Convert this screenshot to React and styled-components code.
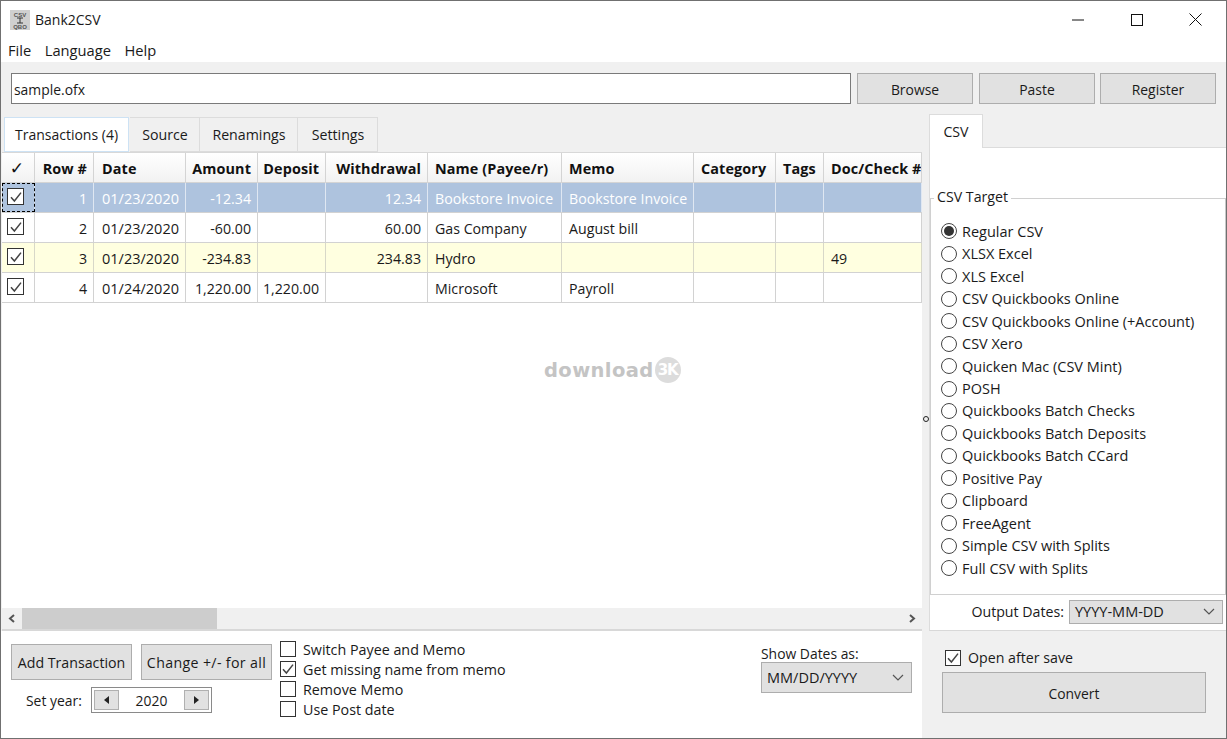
import React from "react";
import styled, { createGlobalStyle } from "styled-components";

const Global = createGlobalStyle`
  * { box-sizing: border-box; }
  html, body { margin: 0; padding: 0; background: #fff; }
  body { font-family: "Open Sans", "Noto Sans", "Liberation Sans", sans-serif; font-size: 13.9px; color: #1a1a1a; }
`;

const Win = styled.div`
  width: 1227px; height: 739px; border: 1px solid #707070; display: flex; flex-direction: column; overflow: hidden; background: #fff;
`;
const TitleBar = styled.div`
  height: 37px; display: flex; align-items: center; padding: 0 1px 0 9px; flex: none;
`;
const AppName = styled.span` margin-left: 5px; font-size: 14px; flex: 1; `;
const WinBtn = styled.button`
  width: 59px; height: 37px; border: 0; background: none; display: flex; align-items: center; justify-content: center; padding: 0;
`;
const MenuBar = styled.div`
  height: 24px; display: flex; align-items: center; padding-left: 7px; gap: 13.5px; flex: none; font-size: 14.7px;
`;
const Toolbar = styled.div`
  height: 52px; background: #f0f0f0; display: flex; padding: 11px 10px 0 10px; flex: none;
`;
const PathInput = styled.div`
  width: 840px; height: 31px; background: #fff; border: 1px solid #7a7a7a; display: flex; align-items: center; padding: 1px 0 0 2px; margin-right: 6px;
`;
const Btn = styled.button`
  font: inherit; color: #1a1a1a; background: #e1e1e1; border: 1px solid #adadad; padding: 1px 0 0;
  width: ${p => p.$w}px; height: ${p => p.$h}px; margin-right: ${p => p.$mr || 0}px; flex: none;
  letter-spacing: ${p => p.$ls || 0}px;
`;
const Main = styled.div` flex: 1; display: flex; min-height: 0; background: #f0f0f0; `;
const LeftPane = styled.div` width: 921px; display: flex; flex-direction: column; flex: none; `;
const TabRow = styled.div` height: 38px; padding: 3px 0 0 3px; display: flex; flex: none; `;
const Tab = styled.div`
  height: 35px; width: ${p => p.$w}px; display: flex; align-items: center; justify-content: center;
  background: ${p => p.$on ? "#fff" : "#f0f0f0"};
  border: 1px solid ${p => p.$on ? "#cde2f4" : "#dcdcdc"};
  border-left-width: ${p => p.$on ? 1 : 0}px;
  margin-right: ${p => p.$on ? 1 : 0}px;
  font-size: ${p => p.$on ? 14 : 14.2}px;
  padding-left: ${p => p.$on ? 0 : 1}px;
`;
const TableArea = styled.div`
  flex: 1; min-height: 0; display: flex; flex-direction: column; background: #fff; margin-left: 1px; position: relative;
`;
const COLS = "33px 59px 92px 72px 68px 102px 134px 132px 82px 48px 98px";
const HeadRow = styled.div`
  display: grid; grid-template-columns: ${COLS}; height: 31px; flex: none;
  background: linear-gradient(#fff, #f2f2f2); border-top: 1px solid #d8d8d8; border-bottom: 1px solid #d4d4d4;
`;
const HeadCell = styled.div`
  display: flex; align-items: center; font-weight: 700; color: #111; padding: 1px 6px 0 ${p => p.$pl || 7}px;
  justify-content: ${p => p.$a === "r" ? "flex-end" : p.$a === "c" ? "center" : "flex-start"};
  border-right: 1px solid #d4d4d4; white-space: nowrap; overflow: hidden; font-size: 14.4px; letter-spacing: .1px;
`;
const CheckMark = styled.span` font-family: "DejaVu Sans", sans-serif; font-weight: 700; font-size: 17px; line-height: 1; margin-right: 3px; `;
const Row = styled.div`
  display: grid; grid-template-columns: ${COLS}; height: 30px; flex: none;
  background: ${p => p.$bg}; color: ${p => p.$fg}; border-bottom: 1px solid #d2d2d2;
`;
const Cell = styled.div`
  display: flex; align-items: center; padding: 1px 6px 0 ${p => p.$pl || 7}px; white-space: nowrap; overflow: hidden; font-size: ${p => p.$fs || 14.2}px;
  justify-content: ${p => p.$a === "r" ? "flex-end" : "flex-start"};
  border-right: 1px solid ${p => p.$line};
`;
const CheckCell = styled(Cell)`
  padding: 0 0 2px 5px;
  outline: ${p => p.$focus ? "1px dashed #000" : "none"}; outline-offset: -1px;
`;
const TableBody = styled.div` flex: 1; `;
const HScroll = styled.div`
  height: 23px; flex: none; background: #f0f0f0; display: flex; align-items: center; border-bottom: 2px solid #d8d8d8;
`;
const ScrollArrow = styled.div` width: 20px; display: flex; justify-content: center; flex: none; `;
const Thumb = styled.div` width: 195px; height: 21px; background: #cdcdcd; flex: none; `;
const ScrollFill = styled.div` flex: 1; `;
const Watermark = styled.div`
  position: absolute; left: 542px; top: 205px; display: flex; align-items: center; gap: 1px;
  font-family: "DejaVu Sans", sans-serif; font-weight: 700; font-size: 19.5px; letter-spacing: .4px; color: #c4c4c4;
`;
const WmBadge = styled.span`
  width: 26px; height: 26px; border-radius: 50%; background: #dcdcdc; color: #fff; font-size: 15px; display: flex; align-items: center; justify-content: center; letter-spacing: -1px;
`;
const Bottom = styled.div`
  height: 107px; flex: none; background: #fff; display: flex; padding: 13px 10px 0 10px;
`;
const BtnCol = styled.div` width: 269px; flex: none; display: flex; flex-direction: column; `;
const BtnRow = styled.div` display: flex; font-size: 14.2px; `;
const YearRow = styled.div` display: flex; align-items: center; margin-top: 7px; padding-left: 15px; `;
const YearLabel = styled.span` width: 65px; flex: none; `;
const Spinner = styled.div`
  width: 121px; height: 26px; border: 1px solid #8a8a8a; padding: 2px; display: flex; align-items: center;
`;
const SpinBtn = styled.div`
  width: 25px; height: 20px; background: #e1e1e1; border: 1px solid #b0b0b0; display: flex; align-items: center; justify-content: center; flex: none;
`;
const SpinVal = styled.span` flex: 1; text-align: center; `;
const CheckCol = styled.div` display: flex; flex-direction: column; flex: 1; margin-top: -5px; font-size: 14.3px; `;
const CheckLine = styled.label`
  height: 20px; display: flex; align-items: center; gap: 7px; white-space: nowrap;
`;
const Box = styled.span`
  width: ${p => p.$s || 16}px; height: ${p => p.$s || 16}px; border: 1px solid #333; background: #fff; display: flex; align-items: center; justify-content: center; flex: none;
`;
const DateCol = styled.div` width: 151px; flex: none; `;
const DateLabel = styled.div` height: 18px; line-height: 19px; white-space: nowrap; `;
const Select = styled.div`
  width: ${p => p.$w}px; height: ${p => p.$h}px; background: #e1e1e1; border: 1px solid #adadad; display: flex; align-items: center; justify-content: space-between; padding: 0 7px 0 5px; flex: none; font-size: 14.5px;
`;
const Splitter = styled.div` width: 7px; flex: none; display: flex; align-items: center; justify-content: center; padding-bottom: 15px; `;
const SplitDot = styled.span` width: 6px; height: 6px; border: 1px solid #222; border-radius: 50%; `;
const RightPane = styled.div` flex: 1; display: flex; flex-direction: column; min-width: 0; `;
const RightTabs = styled.div` height: 33px; flex: none; display: flex; `;
const RightTab = styled.div`
  width: 54px; height: 34px; background: #fff; border: 1px solid #dcdcdc; border-bottom: 0; display: flex; align-items: center; justify-content: center; position: relative; z-index: 1; font-size: 14.2px;
`;
const RightPanel = styled.div`
  height: 484px; flex: none; background: #fff; border: 1px solid #dcdcdc; border-right: 0; border-bottom-color: #d8d8d8; display: flex; flex-direction: column; padding-top: 41px;
`;
const Group = styled.fieldset`
  margin: 0; padding: 13px 0 0 10px; border: 1px solid #d0d0d0; border-right-color: #c8c8c8; height: 406px; min-width: 0; flex: none;
`;
const Legend = styled.legend` padding: 0 3px 2px; margin-left: -7px; line-height: 16px; font-size: 14.2px; `;
const RadioRow = styled.label` height: 22.47px; display: flex; align-items: center; gap: 5px; white-space: nowrap; font-size: 14.5px; `;
const Radio = styled.span`
  width: 16px; height: 16px; border: 1px solid #444; border-radius: 50%; display: flex; align-items: center; justify-content: center; background: #fff; flex: none;
  &::after { content: ""; width: 10px; height: 10px; border-radius: 50%; background: ${p => p.$on ? "#333" : "transparent"}; }
`;
const OutputRow = styled.div`
  flex: 1; display: flex; align-items: center; justify-content: flex-end; gap: 5px; padding: 0 3px 2px 0; font-size: 14.2px;
`;
const Lower = styled.div` flex: 1; padding: 18px 20px 0 13px; display: flex; flex-direction: column; `;
const OpenRow = styled.label` display: flex; align-items: center; gap: 7px; height: 17px; padding-left: 3px; margin-bottom: 6px; font-size: 14.2px; `;

const Chk = ({ on = true, s }) => (
  <Box $s={s}>
    {on && (
      <svg width="12" height="12" viewBox="0 0 12 12"><path d="M1 6.2 4.4 10 11 1.6" fill="none" stroke="#444" strokeWidth="1.5" /></svg>
    )}
  </Box>
);
const Chevron = () => (
  <svg width="12" height="7" viewBox="0 0 12 7"><path d="M1 1 6 6 11 1" fill="none" stroke="#555" strokeWidth="1.2" /></svg>
);

const headers = [["", "c"], ["Row #", "r"], ["Date"], ["Amount", "r"], ["Deposit", "r"], ["Withdrawal", "r"], ["Name (Payee/r)"], ["Memo"], ["Category"], ["Tags"], ["Doc/Check #"]];
const rows = [
  { v: ["1", "01/23/2020", "-12.34", "", "12.34", "Bookstore Invoice", "Bookstore Invoice", "", "", ""], bg: "#aec3de", fg: "#fff", line: "#dfe7f2", focus: true },
  { v: ["2", "01/23/2020", "-60.00", "", "60.00", "Gas Company", "August bill", "", "", ""], bg: "#fff", fg: "#1a1a1a", line: "#d2d2d2" },
  { v: ["3", "01/23/2020", "-234.83", "", "234.83", "Hydro", "", "", "", "49"], bg: "#ffffe0", fg: "#1a1a1a", line: "#d8d8c8" },
  { v: ["4", "01/24/2020", "1,220.00", "1,220.00", "", "Microsoft", "Payroll", "", "", ""], bg: "#fff", fg: "#1a1a1a", line: "#d2d2d2" },
];
const align = ["r", "l", "r", "r", "r", "l", "l", "l", "l", "l"];
const targets = ["Regular CSV", "XLSX Excel", "XLS Excel", "CSV Quickbooks Online", "CSV Quickbooks Online (+Account)", "CSV Xero", "Quicken Mac (CSV Mint)", "POSH", "Quickbooks Batch Checks", "Quickbooks Batch Deposits", "Quickbooks Batch CCard", "Positive Pay", "Clipboard", "FreeAgent", "Simple CSV with Splits", "Full CSV with Splits"];
const options = [["Switch Payee and Memo", false], ["Get missing name from memo", true], ["Remove Memo", false], ["Use Post date", false]];

export default function App() {
  return (
    <Win>
      <Global />
      <TitleBar>
        <svg width="20" height="20" viewBox="0 0 20 20">
          <rect width="20" height="20" fill="#cfcfcf" />
          <text x="10" y="7" fontSize="6" fontWeight="700" textAnchor="middle" fill="#555" fontFamily="Liberation Sans">CSV</text>
          <text x="10" y="18.5" fontSize="6" fontWeight="700" textAnchor="middle" fill="#555" fontFamily="Liberation Sans">QBO</text>
          <path d="M7 8h6M10 8v5M7 13h6" stroke="#333" fill="none" />
        </svg>
        <AppName>Bank2CSV</AppName>
        <WinBtn>
          <svg width="12" height="2" viewBox="0 0 12 2"><path d="M0 1h12" stroke="#111" /></svg>
        </WinBtn>
        <WinBtn>
          <svg width="12" height="12" viewBox="0 0 12 12"><rect x=".5" y=".5" width="11" height="11" fill="none" stroke="#111" /></svg>
        </WinBtn>
        <WinBtn>
          <svg width="13" height="13" viewBox="0 0 13 13"><path d="M.5.5l12 12M12.5.5l-12 12" stroke="#111" /></svg>
        </WinBtn>
      </TitleBar>
      <MenuBar><span>File</span><span>Language</span><span>Help</span></MenuBar>
      <Toolbar>
        <PathInput>sample.ofx</PathInput>
        <Btn $w={116} $h={31} $mr={6}>Browse</Btn>
        <Btn $w={116} $h={31} $mr={5}>Paste</Btn>
        <Btn $w={116} $h={31}>Register</Btn>
      </Toolbar>
      <Main>
        <LeftPane>
          <TabRow>
            <Tab $on $w={125}>Transactions (4)</Tab>
            <Tab $w={70}>Source</Tab>
            <Tab $w={98}>Renamings</Tab>
            <Tab $w={80}>Settings</Tab>
          </TabRow>
          <TableArea>
            <HeadRow>
              {headers.map(([t, a], i) => (
                <HeadCell key={i} $a={a} $pl={i === 2 ? 8 : 7}>{i === 0 ? <CheckMark>✓</CheckMark> : t}</HeadCell>
              ))}
            </HeadRow>
            {rows.map(r => (
              <Row key={r.v[0]} $bg={r.bg} $fg={r.fg}>
                <CheckCell $line={r.line} $focus={r.focus}><Chk s={17} /></CheckCell>
                {r.v.map((c, i) => (
                  <Cell key={i} $a={align[i]} $line={r.line} $pl={i === 1 ? 8 : 7} $fs={i === 1 ? 14.5 : 14.2}>{c}</Cell>
                ))}
              </Row>
            ))}
            <TableBody />
            <Watermark>download<WmBadge>3K</WmBadge></Watermark>
            <HScroll>
              <ScrollArrow><svg width="8" height="9" viewBox="0 0 8 9"><path d="M6 1 2 4.5 6 8" fill="none" stroke="#555" strokeWidth="2" /></svg></ScrollArrow>
              <Thumb />
              <ScrollFill />
              <ScrollArrow><svg width="8" height="9" viewBox="0 0 8 9"><path d="M2 1 6 4.5 2 8" fill="none" stroke="#555" strokeWidth="2" /></svg></ScrollArrow>
            </HScroll>
          </TableArea>
          <Bottom>
            <BtnCol>
              <BtnRow>
                <Btn $w={121} $h={36} $mr={9}>Add Transaction</Btn>
                <Btn $w={131} $h={36} $ls={0.35}>Change +/- for all</Btn>
              </BtnRow>
              <YearRow>
                <YearLabel>Set year:</YearLabel>
                <Spinner>
                  <SpinBtn><svg width="5" height="8" viewBox="0 0 5 8"><path d="M5 0v8L0 4z" fill="#222" /></svg></SpinBtn>
                  <SpinVal>2020</SpinVal>
                  <SpinBtn><svg width="5" height="8" viewBox="0 0 5 8"><path d="M0 0v8l5-4z" fill="#222" /></svg></SpinBtn>
                </Spinner>
              </YearRow>
            </BtnCol>
            <CheckCol>
              {options.map(([t, on]) => <CheckLine key={t}><Chk on={on} />{t}</CheckLine>)}
            </CheckCol>
            <DateCol>
              <DateLabel>Show Dates as:</DateLabel>
              <Select $w={151} $h={31}>MM/DD/YYYY<Chevron /></Select>
            </DateCol>
          </Bottom>
        </LeftPane>
        <Splitter><SplitDot /></Splitter>
        <RightPane>
          <RightTabs><RightTab>CSV</RightTab></RightTabs>
          <RightPanel>
            <Group>
              <Legend>CSV Target</Legend>
              {targets.map((t, i) => <RadioRow key={t}><Radio $on={i === 0} />{t}</RadioRow>)}
            </Group>
            <OutputRow>
              Output Dates:
              <Select $w={154} $h={24}>YYYY-MM-DD<Chevron /></Select>
            </OutputRow>
          </RightPanel>
          <Lower>
            <OpenRow><Chk />Open after save</OpenRow>
            <Btn $w={264} $h={41}>Convert</Btn>
          </Lower>
        </RightPane>
      </Main>
    </Win>
  );
}
